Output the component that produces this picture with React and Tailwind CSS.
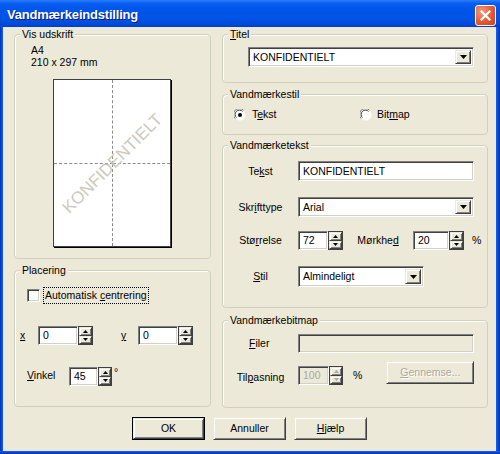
import React from "react";

const U = ({ children }) => <span className="underline decoration-1 underline-offset-[1px]">{children}</span>;

function Group({ label, className, children }) {
  return (
    <div className={`relative border border-[#d0d0bf] rounded-[4px] shadow-[inset_1px_1px_0_#fff] ${className}`}>
      <div className="absolute -top-[7px] left-[5px] px-[2px] bg-[#ece9d8] leading-[13px] whitespace-nowrap">{label}</div>
      {children}
    </div>
  );
}

const sunken = "border border-t-[#808080] border-l-[#808080] border-b-white border-r-white shadow-[inset_1px_1px_0_#404040,inset_-1px_-1px_0_#d4d0c8]";
const raised = "border border-t-[#ece9d8] border-l-[#ece9d8] border-b-[#404040] border-r-[#404040] shadow-[inset_1px_1px_0_#fff,inset_-1px_-1px_0_#808080]";

function DownTri({ color = "#000" }) {
  return (
    <svg width="7" height="4" viewBox="0 0 7 4"><path d="M0 0h7L3.5 4z" fill={color} /></svg>
  );
}

function Combo({ className, text }) {
  return (
    <div className={`flex items-stretch bg-white p-[2px] ${sunken} ${className}`}>
      <span className="flex-1 flex items-center pl-[2px] whitespace-nowrap">{text}</span>
      <div className={`w-[16px] flex items-center justify-center bg-[#ece9d8] ${raised}`}>
        <DownTri />
      </div>
    </div>
  );
}

function Edit({ className, text, disabled }) {
  return (
    <div className={`flex items-center pl-[4px] whitespace-nowrap ${sunken} ${disabled ? "bg-[#ece9d8] text-[#aca899]" : "bg-white"} ${className}`}>
      {text}
    </div>
  );
}

function Spin({ className, disabled }) {
  const c = disabled ? "#aca899" : "#000";
  return (
    <div className={`flex flex-col border border-[#404040] bg-[#ece9d8] ${className}`}>
      <div className={`flex-1 flex items-center justify-center ${raised}`}>
        <svg width="5" height="3" viewBox="0 0 5 3"><path d="M2.5 0L5 3H0z" fill={c} /></svg>
      </div>
      <div className={`flex-1 flex items-center justify-center ${raised}`}>
        <svg width="5" height="3" viewBox="0 0 5 3"><path d="M0 0h5L2.5 3z" fill={c} /></svg>
      </div>
    </div>
  );
}

function Radio({ checked }) {
  return (
    <svg width="12" height="12" viewBox="0 0 12 12">
      <circle cx="6" cy="6" r="5.5" fill="#fff" />
      <path d="M1.2 9.5A5.5 5.5 0 0 1 9.5 1.2" stroke="#808080" strokeWidth="1" fill="none" />
      <path d="M2.4 8.6A4.3 4.3 0 0 1 8.6 2.4" stroke="#404040" strokeWidth="1" fill="none" />
      {checked && <circle cx="6" cy="6" r="2" fill="#000" />}
    </svg>
  );
}

function Btn({ children, def, className }) {
  return (
    <div className={`flex items-center justify-center h-[23px] w-[73px] bg-[#ece9d8] ${def ? "border border-black" : ""} ${className}`}>
      <div className={`flex-1 self-stretch flex items-center justify-center ${raised}`}>{children}</div>
    </div>
  );
}

export default function App() {
  return (
    <div className="w-[500px] h-[454px] flex flex-col bg-[#0054e3] font-['Liberation_Sans',Arial,sans-serif] text-[10.5px] leading-[13px] text-black overflow-hidden">
      {/* title bar */}
      <div className="h-[27px] flex items-start bg-[linear-gradient(180deg,#2b81ff_0%,#0a5ef0_12%,#0055ea_35%,#0053e6_70%,#004ad8_90%,#003fc8_100%)]">
        <div className="mt-[7px] ml-[7px] text-white font-bold text-[13px] leading-[16px] [text-shadow:1px_1px_0_#0a1883] tracking-[-0.2px]">
          Vandmærkeindstilling
        </div>
        <div className="ml-auto mt-[5px] mr-[4px] w-[21px] h-[21px] rounded-[3px] border border-white flex items-center justify-center bg-[radial-gradient(circle_at_30%_30%,#f29a7c,#e45a34_55%,#c7401c)]">
          <svg width="11" height="11" viewBox="0 0 11 11">
            <path d="M1.5 1.5l8 8M9.5 1.5l-8 8" stroke="#fff" strokeWidth="2.2" strokeLinecap="square" />
          </svg>
        </div>
      </div>
      <div className="flex flex-1">
        <div className="w-[3px] bg-[linear-gradient(90deg,#0030b8,#1661ec)]" />
        <div className="flex-1 bg-[#ece9d8] flex flex-col pt-[7px] pl-[11px]">
          <div className="flex">
            {/* left column */}
            <div className="w-[197px] flex flex-col">
              <Group label="Vis udskrift" className="h-[225px]">
                <div className="pt-[9px] pl-[16px] leading-[12px]">
                  <div>A4</div>
                  <div>210 x 297 mm</div>
                </div>
                <div className="ml-[38px] mt-[11px] w-[118px] h-[168px] relative bg-white border border-[#404040] shadow-[1px_1px_0_#000] grid grid-cols-[59px_1fr] grid-rows-[84px_1fr] overflow-hidden">
                  <div className="border-r border-b border-dashed border-[#8a8a8a]" />
                  <div className="border-b border-dashed border-[#8a8a8a]" />
                  <div className="border-r border-dashed border-[#8a8a8a]" />
                  <div />
                  <div className="absolute inset-0 flex items-center justify-center">
                    <div className="-rotate-45 text-[17px] leading-[17px] text-[#cdcabd] whitespace-nowrap">KONFIDENTIELT</div>
                  </div>
                </div>
              </Group>
              <Group label="Placering" className="h-[137px] mt-[11px]">
                <div className="flex items-center mt-[16px] ml-[12px]">
                  <div className={`w-[13px] h-[13px] bg-white ${sunken}`} />
                  <div className="ml-[3px] h-[17px] px-[1px] flex items-center border border-dotted border-black">
                    Automatisk <span className="ml-[3px]"><U>c</U>entrering</span>
                  </div>
                </div>
                <div className="flex items-center mt-[22px] ml-[5px]">
                  <span className="w-[18px]"><U>x</U></span>
                  <Edit className="w-[40px] h-[19px]" text="0" />
                  <Spin className="w-[15px] h-[19px]" />
                  <span className="w-[45px] pl-[28px]"><U>y</U></span>
                  <Edit className="w-[40px] h-[19px]" text="0" />
                  <Spin className="w-[15px] h-[19px]" />
                </div>
                <div className="flex items-start mt-[22px] ml-[12px]">
                  <span className="w-[42px] mt-[2px]"><U>V</U>inkel</span>
                  <Edit className="w-[29px] h-[19px]" text="45" />
                  <Spin className="w-[14px] h-[19px]" />
                  <span className="ml-[2px] -mt-[1px]">°</span>
                </div>
              </Group>
            </div>
            {/* right column */}
            <div className="w-[266px] ml-[11px] flex flex-col">
              <Group label={<><U>T</U>itel</>} className="h-[49px]">
                <Combo className="ml-[25px] mt-[12px] w-[226px] h-[20px]" text="KONFIDENTIELT" />
              </Group>
              <Group label="Vandmærkestil" className="h-[41px] mt-[11px]">
                <div className="flex items-center mt-[13px] ml-[11px]">
                  <Radio checked />
                  <span className="ml-[6px] w-[108px]">T<U>e</U>kst</span>
                  <Radio />
                  <span className="ml-[5px]">Bit<U>m</U>ap</span>
                </div>
              </Group>
              <Group label="Vandmærketekst" className="h-[163px] mt-[10px]">
                <div className="flex items-center mt-[15px]">
                  <span className="w-[75px] text-center">Te<U>k</U>st</span>
                  <Edit className="w-[176px] h-[20px]" text="KONFIDENTIELT" />
                </div>
                <div className="flex items-center mt-[16px]">
                  <span className="w-[75px] text-center">Skr<U>i</U>fttype</span>
                  <Combo className="w-[176px] h-[20px]" text="Arial" />
                </div>
                <div className="flex items-center mt-[14px]">
                  <span className="w-[75px] text-center">Stø<U>r</U>relse</span>
                  <Edit className="w-[30px] h-[19px]" text="72" />
                  <Spin className="w-[15px] h-[19px]" />
                  <span className="w-[70px] text-center">Mørkhe<U>d</U></span>
                  <Edit className="w-[36px] h-[19px]" text="20" />
                  <Spin className="w-[15px] h-[19px]" />
                  <span className="ml-[8px]">%</span>
                </div>
                <div className="flex items-center mt-[16px]">
                  <span className="w-[75px] text-center"><U>S</U>til</span>
                  <Combo className="w-[126px] h-[21px]" text="Almindeligt" />
                </div>
              </Group>
              <Group label="Vandmærkebitmap" className="h-[88px] mt-[12px]">
                <div className="flex items-center mt-[13px]">
                  <span className="w-[75px] pl-[26px]"><U>F</U>iler</span>
                  <Edit className="w-[176px] h-[19px]" text="" disabled />
                </div>
                <div className="flex items-start mt-[8px]">
                  <span className="w-[75px] text-center mt-[10px]">Til<U>p</U>asning</span>
                  <Edit className="w-[31px] h-[19px] mt-[5px]" text="100" disabled />
                  <Spin className="w-[14px] h-[19px] mt-[5px]" disabled />
                  <span className="ml-[10px] mt-[8px]">%</span>
                  <div className={`ml-[24px] w-[88px] h-[23px] flex items-center justify-center text-[#aca899] bg-[#ece9d8] ${raised}`}>
                    <span className="[text-shadow:1px_1px_0_#fff]"><U>G</U>ennemse...</span>
                  </div>
                </div>
              </Group>
            </div>
          </div>
          <div className="flex justify-center gap-[8px] mt-[9px] pr-[11px]">
            <Btn def>OK</Btn>
            <Btn>Annuller</Btn>
            <Btn><span><U>H</U>jælp</span></Btn>
          </div>
        </div>
        <div className="w-[4px] bg-[linear-gradient(90deg,#1661ec,#0030b8)]" />
      </div>
      <div className="h-[3px] bg-[linear-gradient(180deg,#1661ec,#0030b8)]" />
    </div>
  );
}
